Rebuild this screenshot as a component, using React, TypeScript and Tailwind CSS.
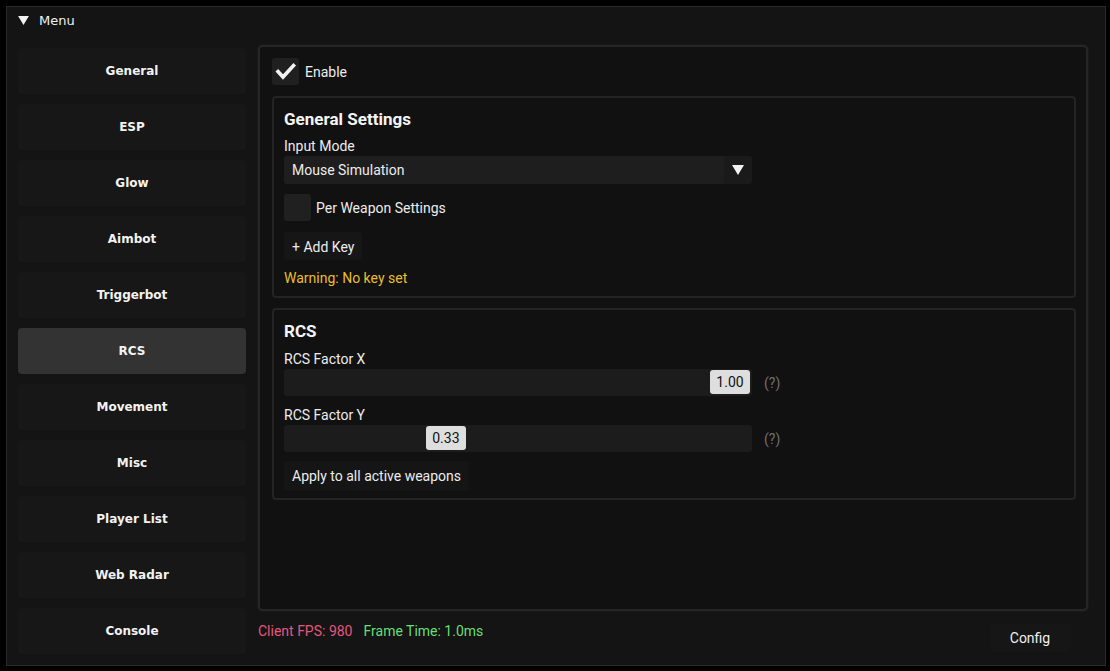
import { useState } from "react";

const TABS = [
  "General",
  "ESP",
  "Glow",
  "Aimbot",
  "Triggerbot",
  "RCS",
  "Movement",
  "Misc",
  "Player List",
  "Web Radar",
  "Console",
];

const ui = { fontFamily: "Roboto, 'Noto Sans', sans-serif" };
const dv = { fontFamily: "'DejaVu Sans', Verdana, sans-serif" };

function Tri({ className }: { className?: string }) {
  return (
    <svg viewBox="0 0 12 10" className={className}>
      <polygon points="0,0 12,0 6,10" fill="#f2f2f2" />
    </svg>
  );
}

function Checkbox({ checked }: { checked: boolean }) {
  return (
    <div className="flex h-[27px] w-[27px] shrink-0 items-center justify-center rounded-[3px] bg-[#202020]">
      {checked && (
        <svg viewBox="0 0 27 27" className="h-[27px] w-[27px]">
          <polyline
            points="6,13.5 11,19 21.5,7.5"
            fill="none"
            stroke="#f2f2f2"
            strokeWidth="3.6"
            strokeLinecap="square"
          />
        </svg>
      )}
    </div>
  );
}

// value in [min, max]; the grab slides across the track minus its own width
function Slider({ value, min = 0, max = 1 }: { value: number; min?: number; max?: number }) {
  const t = (value - min) / (max - min);
  return (
    <div className="flex items-center">
      <div className="relative flex h-[27px] w-[468px] items-center rounded-[3px] bg-[#1c1c1c] px-[2px]">
        <div className="relative h-full w-full">
          <div
            className="absolute top-[1px] flex h-[24px] w-[40px] items-center justify-center rounded-[3px] bg-[#dedede] pt-[1px] text-[14px] text-[#111]"
            style={{ left: `calc(${t * 100}% - ${t * 40}px)` }}
          >
            {value.toFixed(2)}
          </div>
        </div>
      </div>
      <span className="ml-[12px] pt-[1px] text-[14px] text-[#6f6f6f]">(?)</span>
    </div>
  );
}

function Group({ title, children }: { title: string; children: React.ReactNode }) {
  return (
    <div className="rounded-[4px] border-2 border-[#242424] px-[10px]">
      <div className="pt-[10px] text-[17px] font-bold leading-[22px] text-[#f4f4f4]">{title}</div>
      {children}
    </div>
  );
}

export default function App() {
  const [active, setActive] = useState("RCS");

  return (
    <div className="h-[671px] w-[1110px] bg-black pl-[6px] pt-[6px]" style={ui}>
      <div className="flex h-[660px] w-[1100px] flex-col border border-[#2a2a2a] bg-[#141414]">
        {/* title bar */}
        <div className="flex h-[26px] shrink-0 items-center pl-[11px] pt-[1px]" style={dv}>
          <Tri className="h-[9px] w-[11px]" />
          <span className="ml-[10px] text-[13px] text-[#f0f0f0]">Menu</span>
        </div>

        <div className="flex flex-1 pl-[11px] pt-[13px]">
          {/* tabs */}
          <div className="mt-[2px] flex w-[228px] flex-col gap-[10px]" style={dv}>
            {TABS.map((tab) => (
              <button
                key={tab}
                onClick={() => setActive(tab)}
                className={`flex h-[46px] items-center justify-center rounded-[4px] text-[12px] font-bold text-[#f2f2f2] ${
                  active === tab ? "bg-[#333333]" : "bg-[#171717]"
                }`}
              >
                {tab}
              </button>
            ))}
          </div>

          <div className="ml-[12px] flex w-[830px] flex-col">
            <div className="-mt-[1px] h-[566px] rounded-[5px] border-2 border-[#262626] bg-[#111111] pl-[12px] pr-[10px] pt-[11px] shadow-[0_0_2px_#2a2a2a]">
              <div className="flex items-center">
                <Checkbox checked />
                <span className="ml-[6px] pt-[2px] text-[14px] text-[#ececec]">Enable</span>
              </div>

              <div className="mt-[11px]">
                <Group title="General Settings">
                  <div className="mt-[7px] text-[14px] leading-[18px] text-[#ececec]">Input Mode</div>
                  <div className="mt-[1px] flex h-[28px] w-[468px] rounded-[3px] bg-[#1a1a1a]">
                    <div className="flex flex-1 items-center rounded-[3px] bg-[#1e1e1e] pl-[8px] pt-[1px] text-[14px] text-[#ececec]">
                      Mouse Simulation
                    </div>
                    <div className="flex w-[28px] items-center justify-center">
                      <Tri className="h-[10px] w-[12px]" />
                    </div>
                  </div>
                  <div className="mt-[10px] flex items-center">
                    <Checkbox checked={false} />
                    <span className="ml-[5px] pt-[2px] text-[14px] text-[#ececec]">Per Weapon Settings</span>
                  </div>
                  <button className="mt-[11px] flex h-[28px] items-center rounded-[3px] bg-[#161616] px-[8px] pt-[2px] text-[14px] text-[#ececec]">
                    + Add Key
                  </button>
                  <div className="mt-[9px] pb-[9px] text-[14px] leading-[18px] text-[#ebbd2c]">
                    Warning: No key set
                  </div>
                </Group>
              </div>

              <div className="mt-[10px]">
                <Group title="RCS">
                  <div className="mt-[8px] text-[14px] leading-[18px] text-[#ececec]">RCS Factor X</div>
                  <div className="mt-[1px]">
                    <Slider value={1} />
                  </div>
                  <div className="mt-[10px] text-[14px] leading-[18px] text-[#ececec]">RCS Factor Y</div>
                  <div className="mt-[1px]">
                    <Slider value={0.33} />
                  </div>
                  <div className="pb-[7px] pt-[9px]">
                    <button className="flex h-[30px] items-center rounded-[3px] bg-[#151515] px-[8px] pt-[1px] text-[14px] text-[#ececec]">
                      Apply to all active weapons
                    </button>
                  </div>
                </Group>
              </div>
            </div>

            {/* status line + config */}
            <div className="flex items-start pt-[10px]">
              <span className="text-[14px] text-[#e3577d]">Client FPS: 980</span>
              <span className="ml-[11px] text-[14px] text-[#68de74]">Frame Time: 1.0ms</span>
              <button className="ml-auto mr-[18px] mt-[3px] flex h-[28px] w-[80px] items-center justify-center rounded-[3px] bg-[#161616] text-[14px] text-[#f0f0f0]">
                Config
              </button>
            </div>
          </div>
        </div>
      </div>
    </div>
  );
}
